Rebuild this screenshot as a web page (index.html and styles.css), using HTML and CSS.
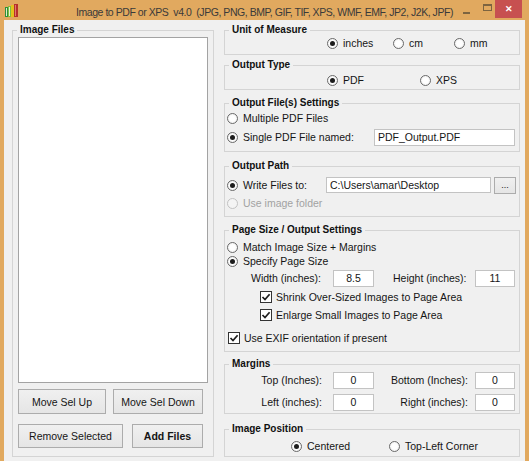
FILE: index.html
```html
<!DOCTYPE html>
<html lang="en">
<head>
  <meta charset="UTF-8">
  <meta name="viewport" content="width=device-width, initial-scale=1.0">
  <title>Image to PDF or XPS</title>
  <link rel="stylesheet" href="styles.css">
</head>
<body>
  <div class="window">
    <div class="titlebar">
      <svg class="app-icon" width="13" height="14" viewBox="0 0 13 14">
        <rect x="0" y="4" width="3" height="10" fill="#2f8f3a"/>
        <rect x="1" y="5" width="1" height="8" fill="#d9f0c8"/>
        <rect x="3" y="3" width="3" height="11" fill="#7fbf3f"/>
        <rect x="4" y="4" width="1" height="9" fill="#e8f5d0"/>
        <rect x="6" y="2" width="3" height="12" fill="#e3c21c"/>
        <rect x="9" y="1" width="4" height="13" fill="#b8322a"/>
        <rect x="10" y="2" width="1" height="11" fill="#e07a70"/>
      </svg>
      <div class="caption">Image to PDF or XPS&nbsp; v4.0&nbsp; (JPG, PNG, BMP, GIF, TIF, XPS, WMF, EMF, JP2, J2K, JPF)</div>
      <div class="controls">
        <span class="btn-min"></span>
        <span class="btn-max"></span>
        <span class="btn-close">&#x2715;</span>
      </div>
    </div>

    <div class="client">
      <fieldset class="group files">
        <legend>Image Files</legend>
        <div class="files-body">
          <div class="listbox"></div>
          <div class="btn-row row-move">
            <button class="btn w88">Move Sel Up</button>
            <button class="btn w90">Move Sel Down</button>
          </div>
          <div class="btn-row row-add">
            <button class="btn w105">Remove Selected</button>
            <button class="btn w71 bold">Add Files</button>
          </div>
        </div>
      </fieldset>

      <div class="settings">
        <fieldset class="group g-unit">
          <legend>Unit of Measure</legend>
          <div class="row unit-row">
            <label class="opt w66"><span class="radio on"></span>inches</label>
            <label class="opt w61"><span class="radio"></span>cm</label>
            <label class="opt"><span class="radio"></span>mm</label>
          </div>
        </fieldset>

        <fieldset class="group g-type">
          <legend>Output Type</legend>
          <div class="row type-row">
            <label class="opt w93"><span class="radio on"></span>PDF</label>
            <label class="opt"><span class="radio"></span>XPS</label>
          </div>
        </fieldset>

        <fieldset class="group g-file">
          <legend>Output File(s) Settings</legend>
          <div class="row h18 pl2">
            <label class="opt"><span class="radio"></span>Multiple PDF Files</label>
          </div>
          <div class="row h20 pl2">
            <label class="opt w147"><span class="radio on"></span>Single PDF File named:</label>
            <div class="textbox w141">PDF_Output.PDF</div>
          </div>
        </fieldset>

        <fieldset class="group g-path">
          <legend>Output Path</legend>
          <div class="row h18 pl2">
            <label class="opt w99"><span class="radio on"></span>Write Files to:</label>
            <div class="textbox w165">C:\Users\amar\Desktop</div>
            <button class="btn browse">...</button>
          </div>
          <div class="row h18 pl2 disabled">
            <label class="opt"><span class="radio"></span>Use image folder</label>
          </div>
        </fieldset>

        <fieldset class="group g-page">
          <legend>Page Size / Output Settings</legend>
          <div class="row h14 pl2">
            <label class="opt"><span class="radio"></span>Match Image Size + Margins</label>
          </div>
          <div class="row h14 pl2">
            <label class="opt"><span class="radio on"></span>Specify Page Size</label>
          </div>
          <div class="row h20 size-row">
            <span class="field-label">Width (inches):</span>
            <div class="textbox num w41">8.5</div>
            <span class="field-label">Height (inches):</span>
            <div class="textbox num w40">11</div>
          </div>
          <div class="row h18 pl35">
            <label class="opt chk"><span class="check"><svg width="10" height="10" viewBox="0 0 10 10"><path d="M1.5 5 L4 7.6 L8.6 2.2" fill="none" stroke="#1e1e1e" stroke-width="1.7"/></svg></span>Shrink Over-Sized Images to Page Area</label>
          </div>
          <div class="row h18 pl35">
            <label class="opt chk"><span class="check"><svg width="10" height="10" viewBox="0 0 10 10"><path d="M1.5 5 L4 7.6 L8.6 2.2" fill="none" stroke="#1e1e1e" stroke-width="1.7"/></svg></span>Enlarge Small Images to Page Area</label>
          </div>
          <div class="row h18 pl3 exif-row">
            <label class="opt chk"><span class="check"><svg width="10" height="10" viewBox="0 0 10 10"><path d="M1.5 5 L4 7.6 L8.6 2.2" fill="none" stroke="#1e1e1e" stroke-width="1.7"/></svg></span>Use EXIF orientation if present</label>
          </div>
        </fieldset>

        <fieldset class="group g-margin">
          <legend>Margins</legend>
          <div class="row h20">
            <span class="margin-label first">Top (Inches):</span>
            <div class="textbox num w41">0</div>
            <span class="margin-label second">Bottom (Inches):</span>
            <div class="textbox num w40">0</div>
          </div>
          <div class="row h20 mt2">
            <span class="margin-label first">Left (inches):</span>
            <div class="textbox num w41">0</div>
            <span class="margin-label second">Right (inches):</span>
            <div class="textbox num w40">0</div>
          </div>
        </fieldset>

        <fieldset class="group g-pos">
          <legend>Image Position</legend>
          <div class="row h18 pos-row">
            <label class="opt w98"><span class="radio on"></span>Centered</label>
            <label class="opt"><span class="radio"></span>Top-Left Corner</label>
          </div>
        </fieldset>
      </div>
    </div>
  </div>
</body>
</html>
```

FILE: styles.css
```css
* {
  box-sizing: border-box;
}
body {
  margin: 0;
  background: #f0f0f0;
  font-family: "Liberation Sans", Arial, sans-serif;
  font-size: 10.5px;
  color: #151515;
}
.window {
  width: 529px;
  height: 461px;
  background: #e1a95f;
  display: flex;
  flex-direction: column;
  overflow: hidden;
}

/* title bar */
.titlebar {
  height: 20px;
  flex: none;
  display: grid;
  grid-template-columns: minmax(0, 1fr) auto minmax(0, 1fr);
}
.app-icon {
  margin: 3px 0 0 5px;
}
.caption {
  padding-top: 4px;
  line-height: 16px;
  font-size: 10.5px;
  letter-spacing: -0.45px;
  color: #3a3a3a;
  white-space: nowrap;
}
.controls {
  justify-self: end;
  display: flex;
  align-items: flex-start;
  padding-right: 7px;
}
.btn-min {
  width: 7px;
  height: 2px;
  margin: 12px 13px 0 0;
  background: #7d6440;
}
.btn-max {
  width: 9px;
  height: 7px;
  margin: 4px 3px 0 0;
  border: 1px solid #7d6440;
  border-top-width: 2px;
}
.btn-close {
  width: 27px;
  height: 18px;
  background: #c75050;
  color: #fff;
  font-size: 9px;
  font-weight: bold;
  line-height: 18px;
  text-align: center;
}

/* client area */
.client {
  flex: 1;
  margin: 0 4px;
  padding: 4px 5px 0 8px;
  background: #f0f0f0;
  display: grid;
  grid-template-columns: 202px 296px;
  column-gap: 10px;
  align-items: start;
}
fieldset {
  margin: 0;
  padding: 0;
  min-width: 0;
  border: 1px solid #d4d4d4;
}
legend {
  margin-left: 4px;
  padding: 0 3px;
  font-size: 10px;
  font-weight: bold;
  line-height: 12px;
  color: #111;
}

/* left panel */
.files-body {
  padding: 1px 5px 8px;
}
.listbox {
  height: 346px;
  background: #fff;
  border: 1px solid #a3a3a3;
}
.btn-row {
  display: flex;
}
.row-move {
  margin-top: 6px;
  height: 25px;
  gap: 7px;
}
.row-add {
  margin-top: 10px;
  height: 24px;
  gap: 9px;
}
.btn {
  height: 100%;
  padding: 0;
  font: inherit;
  color: #151515;
  border: 1px solid #acacac;
  background: linear-gradient(#f0f0f0, #e5e5e5);
}
.btn.bold {
  font-weight: bold;
}
.w88 { width: 88px; }
.w90 { width: 90px; }
.w105 { width: 105px; }
.w71 { width: 71px; }

/* right panel */
.settings {
  display: flex;
  flex-direction: column;
}
.row {
  display: flex;
  align-items: center;
}
.h14 { height: 14px; }
.h18 { height: 18px; }
.h20 { height: 20px; }
.pl2 { padding-left: 2px; }
.pl3 { padding-left: 3px; }
.pl35 { padding-left: 35px; }
.mt2 { margin-top: 2px; }

.opt {
  display: flex;
  align-items: center;
  gap: 5px;
  white-space: nowrap;
}
.opt.chk {
  gap: 4px;
}
.w61 { width: 61px; }
.w66 { width: 66px; }
.w93 { width: 93px; }
.w98 { width: 98px; }
.w99 { width: 99px; }
.w147 { width: 147px; }

.radio {
  width: 11px;
  height: 11px;
  flex: none;
  border: 1px solid #6a6a6a;
  border-radius: 50%;
  background: radial-gradient(circle, #ffffff 40%, #e6e6e6);
  display: flex;
  align-items: center;
  justify-content: center;
}
.radio.on::after {
  content: "";
  width: 5px;
  height: 5px;
  border-radius: 50%;
  background: #1c1c1c;
}
.check {
  width: 12px;
  height: 12px;
  flex: none;
  border: 1px solid #333;
  background: #fff;
  display: flex;
  align-items: center;
  justify-content: center;
}
.disabled {
  color: #a2a2a2;
}
.disabled .radio {
  border-color: #c2c2c2;
  background: #f4f4f4;
}

.textbox {
  height: 17px;
  padding-left: 3px;
  line-height: 15px;
  background: #fff;
  border: 1px solid #c3c3c3;
  white-space: nowrap;
  overflow: hidden;
}
.textbox.num {
  padding-left: 0;
  text-align: center;
}
.w40 { width: 40px; }
.w41 { width: 41px; }
.w141 { width: 141px; }
.w165 { width: 165px; height: 16px; }
.browse {
  width: 22px;
  height: 17px;
  margin-left: 3px;
  font-size: 9px;
  line-height: 10px;
}

.g-unit { margin-top: 0; }
.g-unit .unit-row {
  height: 14px;
  padding-left: 102px;
  margin-bottom: 4px;
}
.g-type { margin-top: 4px; }
.type-row {
  height: 18px;
  padding-left: 102px;
}
.g-file {
  margin-top: 7px;
  padding-bottom: 4px;
}
.g-path {
  margin-top: 8px;
  padding: 4px 0 4px;
}
.g-page {
  margin-top: 7px;
  padding: 4px 0 4px;
}
.size-row {
  padding-left: 26px;
}
.field-label {
  width: 82px;
  white-space: nowrap;
}
.textbox.w41 + .field-label {
  margin-left: 19px;
}
.exif-row {
  margin-top: 5px;
}
.g-margin {
  margin-top: 6px;
  padding-bottom: 1px;
}
.margin-label {
  text-align: right;
  white-space: nowrap;
}
.margin-label.first {
  width: 97px;
  margin-right: 11px;
}
.margin-label.second {
  width: 94px;
  margin-right: 7px;
}
.g-pos {
  margin-top: 9px;
  padding: 2px 0 1px;
}
.pos-row {
  padding-left: 66px;
}
```
